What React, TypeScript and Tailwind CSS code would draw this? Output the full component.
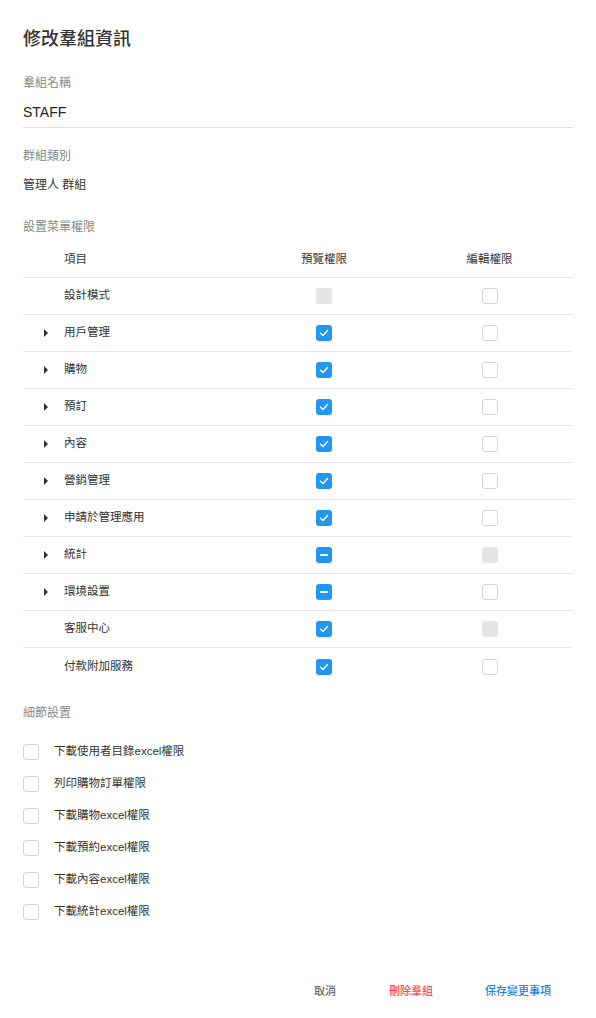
import React from "react";

type Perm = "checked" | "partial" | "empty" | "disabled";

interface MenuRow {
  name: string;
  expandable: boolean;
  view: Perm;
  edit: Perm;
}

const rows: MenuRow[] = [
  { name: "設計模式", expandable: false, view: "disabled", edit: "empty" },
  { name: "用戶管理", expandable: true, view: "checked", edit: "empty" },
  { name: "購物", expandable: true, view: "checked", edit: "empty" },
  { name: "預訂", expandable: true, view: "checked", edit: "empty" },
  { name: "內容", expandable: true, view: "checked", edit: "empty" },
  { name: "營銷管理", expandable: true, view: "checked", edit: "empty" },
  { name: "申請於管理應用", expandable: true, view: "checked", edit: "empty" },
  { name: "統計", expandable: true, view: "partial", edit: "disabled" },
  { name: "環境設置", expandable: true, view: "partial", edit: "empty" },
  { name: "客服中心", expandable: false, view: "checked", edit: "disabled" },
  { name: "付款附加服務", expandable: false, view: "checked", edit: "empty" },
];

const details = [
  "下載使用者目錄excel權限",
  "列印購物訂單權限",
  "下載購物excel權限",
  "下載預約excel權限",
  "下載內容excel權限",
  "下載統計excel權限",
];

function Checkbox({ state }: { state: Perm }) {
  if (state === "checked") {
    return (
      <span className="flex h-4 w-4 items-center justify-center rounded-[3px] bg-[#2196f3]">
        <svg width="10" height="10" viewBox="0 0 10 10" fill="none">
          <path d="M1.5 5.2 L4 7.5 L8.5 2.5" stroke="white" strokeWidth="1.4" strokeLinecap="round" strokeLinejoin="round" />
        </svg>
      </span>
    );
  }
  if (state === "partial") {
    return (
      <span className="flex h-4 w-4 items-center justify-center rounded-[3px] bg-[#2196f3]">
        <span className="h-[2px] w-2 rounded bg-white" />
      </span>
    );
  }
  if (state === "disabled") {
    return <span className="block h-4 w-4 rounded-[3px] bg-[#e5e5e5]" />;
  }
  return <span className="block h-4 w-4 rounded-[3px] border border-[#d3d7db] bg-white" />;
}

export default function App() {
  return (
    <div className="min-h-[1018px] w-[596px] bg-white px-[23px] pt-[27px] text-[#333] [font-family:'Liberation_Sans','Noto_Sans_CJK_TC',sans-serif]">
      <h1 className="text-[18px] font-medium leading-[24px]">修改羣組資訊</h1>

      <div className="mt-[24px] text-[12px] leading-[16px] text-[#888]">羣組名稱</div>
      <div className="mt-[12px] border-b border-[#ddd] pb-[6px] text-[14px] leading-[18px] text-[#222]">
        STAFF
      </div>

      <div className="mt-[20px] text-[12px] leading-[16px] text-[#888]">群組類別</div>
      <div className="mt-[13px] text-[12px] leading-[16px] text-[#333]">管理人 群組</div>

      <div className="mt-[26px] text-[12px] leading-[16px] text-[#888]">設置菜單權限</div>

      <div className="mt-[8px]">
        <div className="grid h-[35px] grid-cols-[219px_164px_167px] items-center border-b border-[#e8e8e8] text-[11.5px]">
          <div className="pl-[41px]">項目</div>
          <div className="text-center">預覽權限</div>
          <div className="text-center">編輯權限</div>
        </div>
        {rows.map((row, i) => (
          <div
            key={row.name}
            className={`grid h-[37px] grid-cols-[219px_164px_167px] items-center text-[11.5px] ${
              i < rows.length - 1 ? "border-b border-[#e8e8e8]" : ""
            }`}
          >
            <div className="flex items-center">
              <span className="flex w-[41px] justify-center pl-[4px]">
                {row.expandable && (
                  <svg width="6" height="10" viewBox="0 0 6 10">
                    <path d="M1 1 L5 5 L1 9 Z" fill="#333" />
                  </svg>
                )}
              </span>
              <span>{row.name}</span>
            </div>
            <div className="flex justify-center">
              <Checkbox state={row.view} />
            </div>
            <div className="flex justify-center">
              <Checkbox state={row.edit} />
            </div>
          </div>
        ))}
      </div>

      <div className="mt-[20px] text-[12px] leading-[16px] text-[#888]">細節設置</div>
      <div className="mt-[23px] flex flex-col gap-[16px]">
        {details.map((d) => (
          <div key={d} className="flex h-[16px] items-center gap-[15px] text-[11.5px]">
            <Checkbox state="empty" />
            <span>{d}</span>
          </div>
        ))}
      </div>

      <div className="mt-[63px] flex justify-end pr-[4px] text-[11px] font-medium">
        <button className="w-[60px] text-center text-[#666]">取消</button>
        <button className="w-[112px] text-center text-[#ff4d4f]">刪除羣組</button>
        <button className="w-[102px] text-center text-[#1a7ff0]">保存變更事項</button>
      </div>
    </div>
  );
}
